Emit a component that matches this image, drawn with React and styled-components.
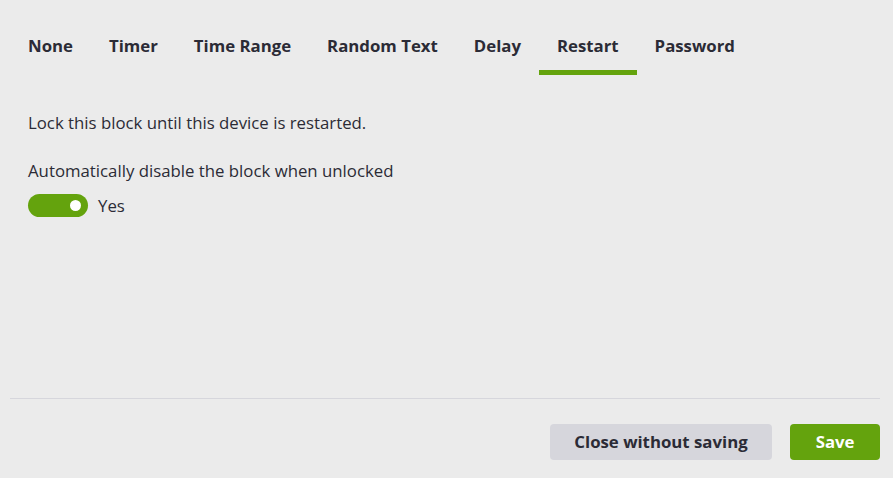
import React, { useState } from "react";
import styled, { createGlobalStyle } from "styled-components";

const Global = createGlobalStyle`
  html, body { margin: 0; padding: 0; background: #ebebeb; }
  body { font-family: "Open Sans", "Liberation Sans", sans-serif; color: #2b2b36; }
`;

const Page = styled.div`
  width: 893px;
  height: 478px;
  box-sizing: border-box;
  padding: 0 13px 0 10px;
  display: flex;
  flex-direction: column;
`;

const Tabs = styled.div`
  display: flex;
  padding-top: 24px;
`;

const Tab = styled.button`
  border: 0;
  background: none;
  font-family: inherit;
  font-size: 16.8px;
  line-height: 22px;
  font-weight: 700;
  color: #2b2b36;
  padding: 11px 18px 13px;
  border-bottom: 5px solid ${(p) => (p.$active ? "#64a30d" : "transparent")};
  cursor: pointer;
  white-space: nowrap;
`;

const Body = styled.div`
  flex: 1;
  padding: 37px 18px 0;
  font-size: 16.8px;
`;

const Para = styled.p`
  margin: 0 0 26px;
  line-height: 22px;
`;

const Label = styled.div`
  line-height: 22px;
  margin-bottom: 12px;
`;

const ToggleRow = styled.label`
  display: flex;
  align-items: center;
  gap: 10px;
  line-height: 22px;
`;

const Track = styled.span`
  width: 60px;
  height: 23px;
  border-radius: 12px;
  background: ${(p) => (p.$on ? "#64a30d" : "#c9c9cf")};
  display: flex;
  align-items: center;
  justify-content: ${(p) => (p.$on ? "flex-end" : "flex-start")};
  padding: 0 7px;
  box-sizing: border-box;
`;

const Knob = styled.span`
  width: 11px;
  height: 11px;
  border-radius: 50%;
  background: #fff;
`;

const Footer = styled.div`
  border-top: 1px solid #d6d6dc;
  height: 80px;
  display: flex;
  justify-content: flex-end;
  align-items: flex-start;
  padding-top: 25px;
  gap: 18px;
  box-sizing: border-box;
`;

const Button = styled.button`
  height: 36px;
  border: 0;
  border-radius: 4px;
  font-family: inherit;
  font-size: 16.8px;
  line-height: 22px;
  font-weight: 700;
  padding: 0 ${(p) => (p.$primary ? "25.5px" : "24.5px")};
  background: ${(p) => (p.$primary ? "#64a30d" : "#d6d6dc")};
  color: ${(p) => (p.$primary ? "#fff" : "#2b2b36")};
  cursor: pointer;
`;

const tabs = ["None", "Timer", "Time Range", "Random Text", "Delay", "Restart", "Password"];

export default function App() {
  const [active, setActive] = useState("Restart");
  const [on, setOn] = useState(true);
  return (
    <>
      <Global />
      <Page>
        <Tabs>
          {tabs.map((t) => (
            <Tab key={t} $active={t === active} onClick={() => setActive(t)}>
              {t}
            </Tab>
          ))}
        </Tabs>
        <Body>
          <Para>Lock this block until this device is restarted.</Para>
          <Label>Automatically disable the block when unlocked</Label>
          <ToggleRow onClick={() => setOn(!on)}>
            <Track $on={on}>
              <Knob />
            </Track>
            Yes
          </ToggleRow>
        </Body>
        <Footer>
          <Button>Close without saving</Button>
          <Button $primary>Save</Button>
        </Footer>
      </Page>
    </>
  );
}
